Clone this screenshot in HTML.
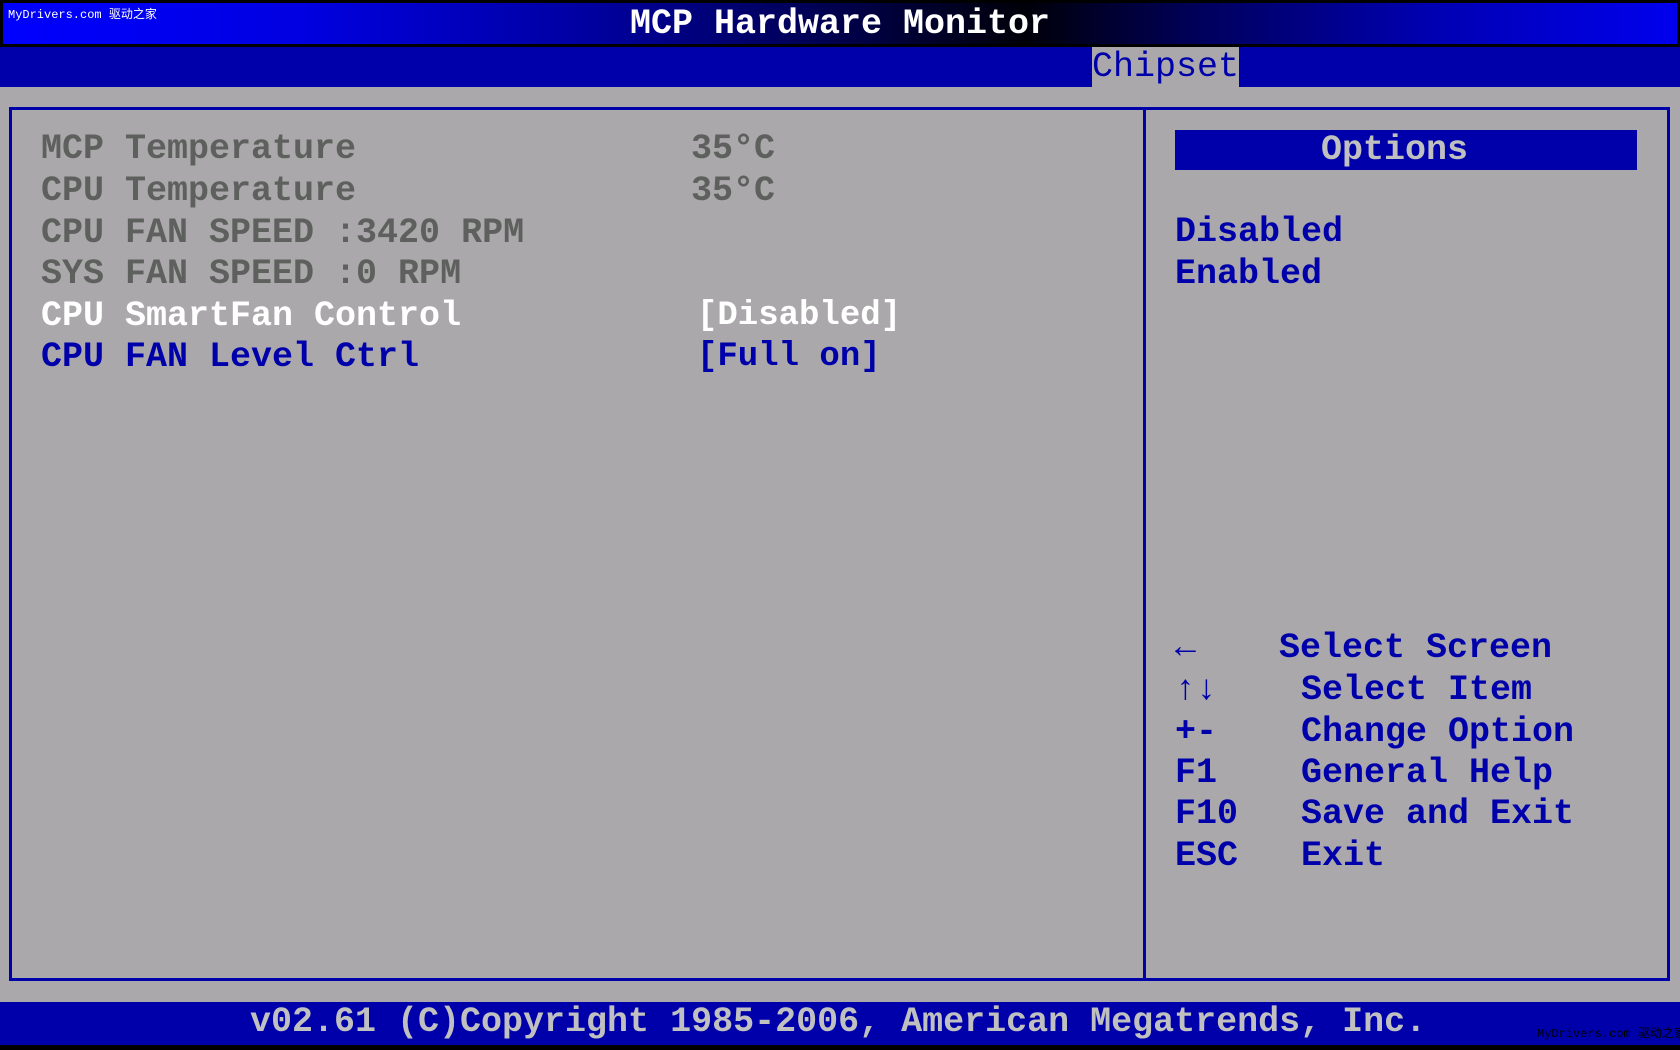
<!DOCTYPE html>
<html><head><meta charset="utf-8"><style>
*{margin:0;padding:0;box-sizing:border-box}
body{width:1680px;height:1050px;background:#aaa8aa;position:relative;overflow:hidden;font-family:"Liberation Mono",monospace;font-weight:bold;font-size:35px}
.t{position:absolute;white-space:pre;line-height:42px}
#top{position:absolute;left:0;top:0;width:1680px;height:47px;background:linear-gradient(90deg,#0000ff 0%,#0000e0 18%,#0000a0 35%,#000040 52%,#000008 61%,#000060 72%,#0000b0 85%,#0000ee 100%);border:3px solid #000}
#bar2{position:absolute;left:0;top:47px;width:1680px;height:40px;background:#0000aa}
#tab{position:absolute;left:1092px;top:47px;width:147px;height:40px;background:#aaa8aa}
#lp{position:absolute;left:9px;top:107px;width:1137px;height:874px;border:3px solid #0000aa}
#rp{position:absolute;left:1143px;top:107px;width:527px;height:874px;border:3px solid #0000aa}
#opt{position:absolute;left:1175px;top:130px;width:462px;height:40px;background:#0000aa}
#foot{position:absolute;left:0;top:1002px;width:1680px;height:43px;background:#0000aa}
#blk{position:absolute;left:0;top:1045px;width:1680px;height:5px;background:#000}
.g{color:#5e605e}.w{color:#fff}.b{color:#0000aa}.l{color:#c0c0c0}
</style></head><body>
<div id="top"></div><div id="bar2"></div><div id="tab"></div>
<div id="lp"></div><div id="rp"></div><div id="opt"></div>
<div id="foot"></div><div id="blk"></div>
<div class="t" style="left:8px;top:8px;font-size:12px;line-height:14px;font-weight:normal;color:#fff;font-family:'Liberation Mono','Noto Sans CJK SC',monospace">MyDrivers.com 驱动之家</div>
<div class="t w" style="left:0;width:1680px;text-align:center;top:3px">MCP Hardware Monitor</div>
<div class="t b" style="left:1092px;top:46px;font-weight:normal">Chipset</div>
<div class="t g" style="left:41px;top:128px">MCP Temperature</div>
<div class="t g" style="left:691px;top:128px">35°C</div>
<div class="t g" style="left:41px;top:170px">CPU Temperature</div>
<div class="t g" style="left:691px;top:170px">35°C</div>
<div class="t g" style="left:41px;top:212px">CPU FAN SPEED :3420 RPM</div>
<div class="t g" style="left:41px;top:253px">SYS FAN SPEED :0 RPM</div>
<div class="t w" style="left:41px;top:295px">CPU SmartFan Control</div>
<div class="t w" style="left:697px;top:295px;font-size:34px">[Disabled]</div>
<div class="t b" style="left:41px;top:336px">CPU FAN Level Ctrl</div>
<div class="t b" style="left:697px;top:336px;font-size:34px">[Full on]</div>
<div class="t l" style="left:1321px;top:129px">Options</div>
<div class="t b" style="left:1175px;top:211px">Disabled</div>
<div class="t b" style="left:1175px;top:253px">Enabled</div>
<div class="t b" style="left:1175px;top:627px">←</div>
<div class="t b" style="left:1279px;top:627px">Select Screen</div>
<div class="t b" style="left:1175px;top:669px">↑↓</div>
<div class="t b" style="left:1301px;top:669px">Select Item</div>
<div class="t b" style="left:1175px;top:711px">+-</div>
<div class="t b" style="left:1301px;top:711px">Change Option</div>
<div class="t b" style="left:1175px;top:752px">F1</div>
<div class="t b" style="left:1301px;top:752px">General Help</div>
<div class="t b" style="left:1175px;top:793px">F10</div>
<div class="t b" style="left:1301px;top:793px">Save and Exit</div>
<div class="t b" style="left:1175px;top:835px">ESC</div>
<div class="t b" style="left:1301px;top:835px">Exit</div>
<div class="t l" style="left:250px;top:1001px">v02.61 (C)Copyright 1985-2006, American Megatrends, Inc.</div>
<div class="t" style="left:1537px;top:1027px;font-size:12px;line-height:14px;font-weight:normal;color:#000;font-family:'Liberation Mono','Noto Sans CJK SC',monospace">MyDrivers.com 驱动之家</div>
</body></html>
